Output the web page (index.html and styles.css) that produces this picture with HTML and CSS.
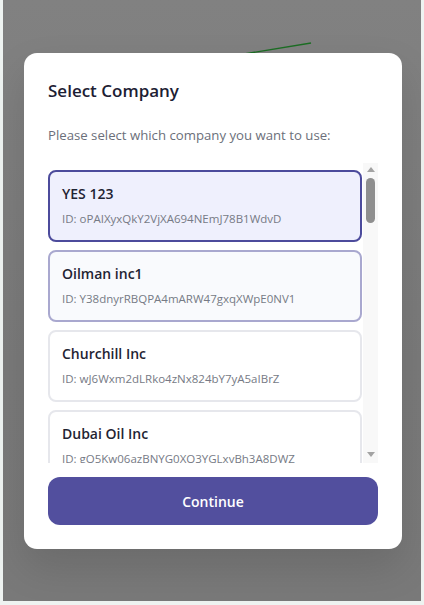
FILE: index.html
```html
<!DOCTYPE html>
<html lang="en">
<head>
<meta charset="utf-8">
<title>Select Company</title>
<link rel="stylesheet" href="styles.css">
</head>
<body>
<div class="page">
  <div class="overlay">
    <svg class="bg-line" width="80" height="20" viewBox="0 0 80 20"><line x1="0" y1="16" x2="67" y2="5" stroke="#1c6e24" stroke-width="1.3"/></svg>
    <div class="modal">
      <h2 class="title">Select Company</h2>
      <p class="subtitle">Please select which company you want to use:</p>
      <div class="list-wrap">
        <div class="list">
          <div class="card selected">
            <div class="name">YES 123</div>
            <div class="cid">ID: oPAIXyxQkY2VjXA694NEmJ78B1WdvD</div>
          </div>
          <div class="card hover">
            <div class="name">Oilman inc1</div>
            <div class="cid">ID: Y38dnyrRBQPA4mARW47gxqXWpE0NV1</div>
          </div>
          <div class="card">
            <div class="name">Churchill Inc</div>
            <div class="cid">ID: wJ6Wxm2dLRko4zNx824bY7yA5aIBrZ</div>
          </div>
          <div class="card">
            <div class="name">Dubai Oil Inc</div>
            <div class="cid">ID: gO5Kw06azBNYG0XO3YGLxvBh3A8DWZ</div>
          </div>
        </div>
        <div class="scrollbar">
          <span class="arrow up"></span>
          <div class="track"><span class="thumb"></span></div>
          <span class="arrow down"></span>
        </div>
      </div>
      <button class="continue">Continue</button>
    </div>
  </div>
</div>
</body>
</html>
```
FILE: styles.css
```css
* { box-sizing: border-box; }
html, body { margin: 0; padding: 0; }
body {
  background: #eef3f1;
  font-family: "Open Sans", "Noto Sans", sans-serif;
  width: 424px;
  height: 605px;
  overflow: hidden;
}
.page { padding: 0 3px 4px 3px; }
.overlay {
  position: relative;
  height: 601px;
  background: linear-gradient(180deg, #818181 0%, #7a7a7a 60%, #797979 100%);
  padding: 53px 0 0 21px;
}
.bg-line {
  position: absolute;
  left: 241px;
  top: 38px;
}
.modal {
  position: relative;
  width: 378px;
  height: 496px;
  background: #ffffff;
  border-radius: 13px;
  padding: 24px 24px 24px 24px;
  box-shadow: 0 18px 40px rgba(0,0,0,0.12);
}
.title {
  margin: 0;
  font-size: 17px;
  font-weight: 600;
  line-height: 28px;
  color: #1c2033;
}
.subtitle {
  margin: 21px 0 0 0;
  font-size: 13.2px;
  line-height: 18px;
  color: #6b6f7a;
}
.list-wrap {
  margin-top: 19px;
  height: 300px;
  display: flex;
  overflow: hidden;
}
.list {
  width: 315px;
  display: flex;
  flex-direction: column;
  gap: 8px;
  padding-top: 7px;
  overflow: hidden;
}
.card {
  flex: none;
  width: 314px;
  height: 72px;
  border: 2px solid #e6e7ec;
  border-radius: 8px;
  background: #fff;
  padding: 12px 12px;
}
.card.selected {
  border-color: #4c4b9c;
  background: #eff0fd;
}
.card.hover {
  border-color: #a9a8cf;
  background: #f9fafd;
}
.name {
  font-size: 14px;
  font-weight: 600;
  line-height: 20px;
  color: #1f2433;
}
.cid {
  margin-top: 7px;
  font-size: 11.5px;
  line-height: 16px;
  color: #767a85;
}
.scrollbar {
  width: 15px;
  background: #f8f8f8;
  display: flex;
  flex-direction: column;
  align-items: center;
  padding: 4px 0 6px 0;
}
.arrow {
  width: 0;
  height: 0;
  border-left: 4px solid transparent;
  border-right: 4px solid transparent;
  flex: none;
}
.arrow.up { border-bottom: 5px solid #a3a3a3; }
.arrow.down { border-top: 5px solid #a3a3a3; }
.track {
  flex: 1;
  width: 100%;
  display: flex;
  flex-direction: column;
  align-items: center;
  padding-top: 6px;
}
.thumb {
  width: 9px;
  height: 45px;
  border-radius: 5px;
  background: #8f8f8f;
}
.continue {
  display: block;
  margin-top: 14px;
  width: 330px;
  height: 48px;
  border: none;
  border-radius: 12px;
  background: #524f9e;
  color: #fff;
  font-family: inherit;
  font-size: 14px;
  font-weight: 600;
}
```
